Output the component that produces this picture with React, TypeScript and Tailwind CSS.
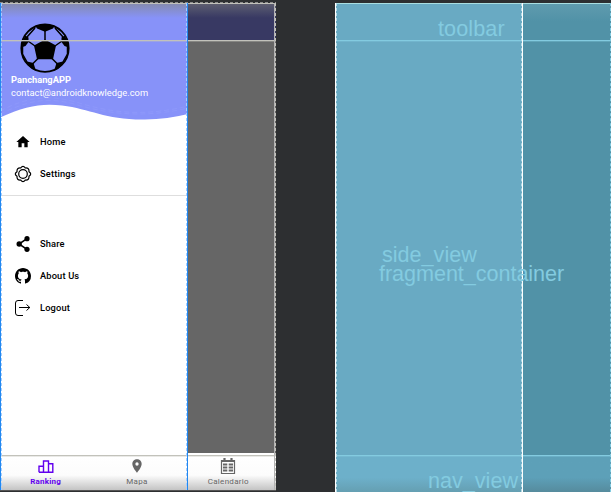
import React from "react";

function Ball() {
  return (
    <svg viewBox="0 0 50 50" className="block h-[50px] w-[50px]" fill="none" stroke="#000" strokeWidth="1.5">
      <circle cx="25" cy="25.2" r="23.7" strokeWidth="1.8" />
      <path
        fill="#000"
        stroke="none"
        d="M25 16.5 36 22.500 33 36.300H17L14 22.500ZM15.500 3Q25-.3 34.500 3L33 5.500 25 8.800 17 5.500ZM1.200 24.500Q1.500 18.500 5.300 12.500L8.500 14.500V19L5.500 23ZM48.800 24.500Q48.500 18.500 44.700 12.500L41.500 14.500V19L44.500 23ZM5 38 13.500 40 16 48Q9.500 45 5 38ZM45 38 36.500 40 34 48Q40.500 45 45 38Z"
      />
      <path d="M25 8V17M8 18 15 23M42 18 35 23M18 35.500 12.500 41M32 35.500 37.500 41M2.500 23V31L7 39M47.500 23V31L43 39M7 14 15 5M43 14 35 5" />
    </svg>
  );
}

function HomeIcon() {
  return (
    <svg viewBox="0 0 24 24" className="h-4 w-4"><path d="M10 20v-6h4v6h5v-8h3L12 3 2 12h3v8z" /></svg>
  );
}

function SettingsIcon() {
  return (
    <svg viewBox="0 0 16 16" className="h-4 w-4 overflow-visible" fill="none" stroke="#000" strokeWidth="1.2">
      <circle cx="8" cy="8" r="4.3" />
      <path d="M5.700 2Q8-1.400 10.300 2Q14.400 1.600 14 5.700Q17.400 8 14 10.300Q14.400 14.400 10.300 14Q8 17.400 5.700 14Q1.600 14.400 2 10.300Q-1.400 8 2 5.700Q1.600 1.600 5.700 2Z" />
    </svg>
  );
}

function ShareIcon() {
  return (
    <svg viewBox="0 0 16 16" className="h-4 w-4" stroke="#000" strokeWidth="1.6">
      <path d="M12 2.700 4 8l8 5.300" fill="none" />
      <g stroke="none"><circle cx="12" cy="2.700" r="2.600" /><circle cx="4.200" cy="8" r="2.700" /><circle cx="12" cy="13.300" r="2.600" /></g>
    </svg>
  );
}

function GithubIcon() {
  return (
    <svg viewBox="0 0 16 16" className="h-4 w-4">
      <path d="M8 0C3.58 0 0 3.58 0 8c0 3.54 2.29 6.53 5.47 7.59.4.07.55-.17.55-.38 0-.19-.01-.82-.01-1.49-2.01.37-2.53-.49-2.69-.94-.09-.23-.48-.94-.82-1.13-.28-.15-.68-.52-.01-.53.63-.01 1.08.58 1.23.82.72 1.21 1.87.87 2.33.66.07-.52.28-.87.51-1.07-1.78-.2-3.64-.89-3.64-3.95 0-.87.31-1.59.82-2.15-.08-.2-.36-1.02.08-2.12 0 0 .67-.21 2.2.82.64-.18 1.32-.27 2-.27s1.36.09 2 .27c1.53-1.04 2.2-.82 2.2-.82.44 1.1.16 1.92.08 2.12.51.56.82 1.27.82 2.15 0 3.07-1.87 3.75-3.65 3.95.29.25.54.73.54 1.48 0 1.07-.01 1.93-.01 2.2 0 .21.15.46.55.38A8.01 8.01 0 0016 8c0-4.42-3.58-8-8-8z" />
    </svg>
  );
}

function LogoutIcon() {
  return (
    <svg viewBox="0 0 16 16" className="h-4 w-4" fill="none" stroke="#000" strokeWidth="1">
      <path d="M8 .5H3Q.5.5.5 3v10Q.5 15.500 3 15.500H8" /><path d="M4 7.500h11M11.500 4.500 14.800 7.500l-3.300 3" />
    </svg>
  );
}

function MenuItem({ icon, label }: { icon: React.ReactNode; label: string }) {
  return (
    <div className="flex h-8 items-center gap-[9px] pl-[15px] text-[9.3px] font-medium tracking-[0.15px] text-black">
      {icon}
      <span>{label}</span>
    </div>
  );
}

function Tab({ icon, label, active = false }: { icon: React.ReactNode; label: string; active?: boolean }) {
  return (
    <div className={"flex flex-1 flex-col items-center pt-[2px] " + (active ? "font-bold text-[#6200ee]" : "text-[#666]")}>
      {icon}
      <span className={active ? "pt-[2px] text-[8px] leading-[11px] tracking-[0.2px]" : "pt-[2px] text-[8px] leading-[11px] tracking-[0.3px]"}>{label}</span>
    </div>
  );
}

function Guides({ tone }: { tone: "gray" | "blue" }) {
  const gray = tone === "gray";
  const line = gray ? "border-[#c2c2bb]" : "border-[#83cbe0]";
  const edge = gray ? "#8c8c8c" : "#69acc2";
  return (
    <div className="pointer-events-none absolute inset-0">
      <div className={"absolute inset-x-0 top-0 border-t " + (gray ? "border-[#c2c2bb]" : "border-[#a9dfe2]")} />
      <div className={"absolute inset-x-0 top-[37px] border-t " + line} />
      <div className={"absolute inset-x-0 top-[38px] border-t opacity-35 " + line} />
      <div className={"absolute inset-x-0 top-[452px] border-t " + line} />
      <div className={"absolute inset-x-0 top-[453px] border-t opacity-35 " + line} />
      <div className={"absolute inset-y-0 right-0 border-r border-dashed " + line} />
      {gray && <div className="absolute inset-y-0 right-px border-r border-[#b4b4b4]" />}
      <svg className="absolute -top-px left-0 h-px w-full"><path d="M0 .5H276" stroke={edge} strokeDasharray="3 2" /></svg>
      <div className={"absolute top-0 bottom-0 left-0 w-[188px] border-x " + (gray ? "border-[#2388ef]" : "border-white")} />
      <div className={"absolute top-0 bottom-0 left-px w-[186px] border-x border-dashed " + (gray ? "border-[#a5ceff]" : "border-[#b4dce7]")} />
    </div>
  );
}

function Preview() {
  return (
    <section className="relative flex h-[488px] w-[276px] flex-col bg-white">
      <div className="flex h-[450px]">
        <aside className="flex w-[188px] flex-col bg-white">
          <header className="relative h-[117px] bg-[#8792f9]">
            <div className="absolute inset-x-0 top-0 h-[15px] bg-gradient-to-b from-[#858aac] to-[#8792f9]" />
            <div className="relative pt-[20px] pl-[20px]"><Ball /></div>
            <div className="relative pl-[11px] text-white">
              <div className="text-[9.3px] leading-[13px] font-bold">PanchangAPP</div>
              <div className="text-[9.35px] leading-[13px]">contact@androidknowledge.com</div>
            </div>
            <svg viewBox="0 0 188 24" className="absolute bottom-0 left-0 h-6 w-full" fill="none">
              <path d="M0 21.500C25 10 42 7 62 9.500C91 13 105 24 145 23.500Q168 23 188 18V24H0Z" fill="#fff" />
              <path d="M0 15C29 0 50-1 76 6C114 18 147 20 188 10M0 18C30 4 47 1 74 8C114 20 150 21 188 12" stroke="#a0aaff" strokeWidth=".6" strokeDasharray="5 3" opacity=".4" />
            </svg>
          </header>
          <nav className="flex flex-col pt-[6px]">
            <MenuItem icon={<HomeIcon />} label="Home" />
            <MenuItem icon={<SettingsIcon />} label="Settings" />
            <hr className="mt-[5px] mb-8 border-t border-[#dedede]" />
            <MenuItem icon={<ShareIcon />} label="Share" />
            <MenuItem icon={<GithubIcon />} label="About Us" />
            <MenuItem icon={<LogoutIcon />} label="Logout" />
          </nav>
        </aside>
        <div className="flex flex-1 flex-col bg-[#666]">
          <div className="h-[37px] bg-gradient-to-b from-[#606071] via-[#383963] via-40% to-[#383963]" />
        </div>
      </div>
      <footer className="mt-[3px] flex h-[35px] bg-gradient-to-b from-white via-[#fcfcfc] via-55% to-[#c0c0c0] pr-[2px]">
        <Tab active label="Ranking" icon={
          <svg viewBox="0 0 16 16" className="h-4 w-4" fill="none" stroke="currentColor" strokeWidth="1.4"><path d="M1 14.300V8.300h4.500v6M5.500 14.300V3h5v11.300M10.500 5.800h4.300v8.500H1" /></svg>
        } />
        <Tab label="Mapa" icon={
          <svg viewBox="0 0 24 24" className="h-4 w-4" fill="currentColor"><path d="M12 2C8.100 2 5 5.100 5 9c0 5.200 7 13 7 13s7-7.800 7-13c0-3.900-3.100-7-7-7zm0 9.500A2.500 2.500 0 1 1 12 6.500a2.500 2.500 0 0 1 0 5z" /></svg>
        } />
        <Tab label="Calendario" icon={
          <svg viewBox="0 0 16 16" className="h-4 w-4 overflow-visible" fill="none" stroke="currentColor"><path d="M1.500 2.500h13v13h-13Z" strokeWidth="1.200" /><path d="M1 3h14M4.500 0v3M11.500 0v3" strokeWidth="2.200" /><path d="M3 6.500h4.300M8.700 6.500H13M3 9.500h4.300M8.700 9.500H13M3 12.500h4.300M8.700 12.500H13" strokeWidth="2" /></svg>
        } />
      </footer>
      <Guides tone="gray" />
      <div className="absolute inset-x-0 bottom-0 h-px bg-[#555]" />
    </section>
  );
}

function Blueprint() {
  return (
    <section className="relative flex h-[489px] w-[276px] flex-col overflow-hidden bg-[#5192a7] font-['Liberation_Sans',Arial,sans-serif] text-[21.6px] leading-[19px] text-[#83cbe0]">
      <div className="flex flex-1">
        <div className="w-[188px] bg-[#69aac3]" />
        <div className="flex-1"><div className="h-[18px] bg-gradient-to-b from-[#609caf] to-[#5192a7]" /></div>
      </div>
      <div className="flex h-[36px]">
        <div className="w-[188px] bg-gradient-to-b from-[#6db0ca] via-[#6db0ca] via-60% to-[#659fb2]" />
        <div className="flex-1 bg-gradient-to-b from-[#5da0b8] via-[#5da0b8] via-60% to-[#568b9d]" />
      </div>
      <Guides tone="blue" />
      <span className="absolute top-[16px] left-[103px] tracking-[0.1px]">toolbar</span>
      <span className="absolute top-[242px] left-[47px]">side_view</span>
      <span className="absolute top-[261px] left-[44px] tracking-[-0.05px]">fragment_container</span>
      <span className="absolute top-[468px] left-[93px]">nav_view</span>
    </section>
  );
}

export default function App() {
  return (
    <main className="flex h-[492px] w-[611px] items-start justify-between overflow-hidden bg-[#2d2f31] pt-[3px] font-[Roboto,sans-serif]">
      <Preview />
      <Blueprint />
    </main>
  );
}
